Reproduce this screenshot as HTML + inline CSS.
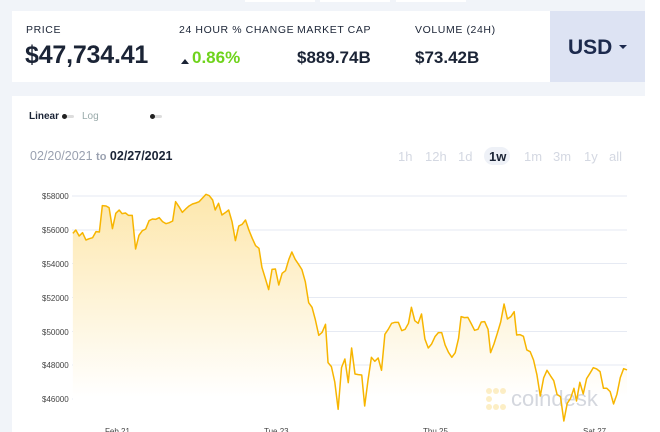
<!DOCTYPE html>
<html><head><style>
*{margin:0;padding:0;box-sizing:border-box}
body{width:660px;height:432px;overflow:hidden;background:#fff;font-family:"Liberation Sans",sans-serif;position:relative}
.bg{position:absolute;left:0;top:0;width:645px;height:432px;background:#f1f4f9}
.a{position:absolute}
.lbl{font-size:10.5px;letter-spacing:0.6px;color:#1b2436}
.val{font-weight:bold;color:#1b2436}
</style></head><body>
<div class="bg"></div>
<div class="a" style="left:245px;top:0;width:70px;height:2px;background:#fff"></div>
<div class="a" style="left:320px;top:0;width:70px;height:2px;background:#fff"></div>
<div class="a" style="left:396px;top:0;width:70px;height:2px;background:#fff"></div>
<div class="a" style="left:12px;top:11px;width:538px;height:71px;background:#fff"></div>
<div class="a" style="left:550px;top:11px;width:95px;height:71px;background:#dde3f3"></div>
<div class="a lbl" style="left:26px;top:24px">PRICE</div>
<div class="a val" style="left:25px;top:41px;font-size:25px;letter-spacing:-0.2px">$47,734.41</div>
<div class="a lbl" style="left:179px;top:24px">24 HOUR % CHANGE</div>
<div class="a" style="left:181px;top:59px;width:0;height:0;border-left:4px solid transparent;border-right:4px solid transparent;border-bottom:5px solid #1b2436"></div>
<div class="a" style="left:192px;top:48px;font-size:17px;font-weight:bold;color:#6fd31c">0.86%</div>
<div class="a lbl" style="left:297px;top:24px">MARKET CAP</div>
<div class="a val" style="left:297px;top:48px;font-size:17px">$889.74B</div>
<div class="a lbl" style="left:415px;top:24px">VOLUME (24H)</div>
<div class="a val" style="left:415px;top:48px;font-size:17px">$73.42B</div>
<div class="a val" style="left:568px;top:36px;font-size:21px;color:#1c2a4d">USD</div>
<div class="a" style="left:619px;top:45px;width:0;height:0;border-left:4px solid transparent;border-right:4px solid transparent;border-top:4px solid #1c2a4d"></div>
<div class="a" style="left:12px;top:96px;width:633px;height:336px;background:#fff"></div>
<div class="a" style="left:29px;top:111px;font-size:10px;font-weight:bold;color:#1b2436">Linear</div>
<div class="a" style="left:62px;top:115px;width:12px;height:3px;background:#ddd;border-radius:2px"></div>
<div class="a" style="left:62px;top:114px;width:5px;height:5px;background:#222;border-radius:50%"></div>
<div class="a" style="left:82px;top:111px;font-size:10px;color:#9aa">Log</div>
<div class="a" style="left:150px;top:115px;width:12px;height:3px;background:#ddd;border-radius:2px"></div>
<div class="a" style="left:150px;top:114px;width:5px;height:5px;background:#222;border-radius:50%"></div>
<div class="a" style="left:30px;top:149px;font-size:12.5px;color:#9aa1b0">02/20/2021 <span style="font-size:11px;font-weight:bold">to</span> <span style="color:#1b2436;font-weight:bold">02/27/2021</span></div>
<div class="a" style="left:398px;top:149px;font-size:13px;color:#d4d8e2">1h</div>
<div class="a" style="left:425px;top:149px;font-size:13px;color:#d4d8e2">12h</div>
<div class="a" style="left:458px;top:149px;font-size:13px;color:#d4d8e2">1d</div>
<div class="a" style="left:484px;top:147px;width:26px;height:18px;border-radius:9px;background:#eef1f7"></div>
<div class="a" style="left:489px;top:149px;font-size:13px;font-weight:bold;color:#1b2436">1w</div>
<div class="a" style="left:524px;top:149px;font-size:13px;color:#d4d8e2">1m</div>
<div class="a" style="left:553px;top:149px;font-size:13px;color:#d4d8e2">3m</div>
<div class="a" style="left:584px;top:149px;font-size:13px;color:#d4d8e2">1y</div>
<div class="a" style="left:609px;top:149px;font-size:13px;color:#d4d8e2">all</div>
<svg class="a" style="left:0;top:0" width="660" height="432">
<defs><linearGradient id="g" x1="0" y1="0" x2="0" y2="1"><stop offset="0" stop-color="#fde7ac"/><stop offset="0.85" stop-color="#fff" stop-opacity="1"/></linearGradient></defs>
<g stroke="#e6eaf3" stroke-width="1">
<line x1="72" y1="196" x2="627" y2="196"/><line x1="72" y1="230" x2="627" y2="230"/><line x1="72" y1="263.5" x2="627" y2="263.5"/><line x1="72" y1="297.5" x2="627" y2="297.5"/><line x1="72" y1="331.5" x2="627" y2="331.5"/><line x1="72" y1="365" x2="627" y2="365"/><line x1="72" y1="399" x2="627" y2="399"/>
</g>
<g transform="translate(0,170) scale(0.4211,0.3333)">
<path fill="url(#g)" d="M173,190 L180,180 188,198 196,188 204,210 212,206 220,203 228,185 236,186 243,107 252,108 259,113 267,176 275,130 283,120 290,131 298,129 305,136 314,136 322,237 330,196 338,182 346,177 354,152 362,147 370,148 378,143 386,155 394,161 402,158 410,153 417,95 425,110 433,127 441,117 449,108 457,102 465,99 473,95 481,84 489,73 497,77 505,90 511,120 519,100 527,135 535,128 543,120 551,155 559,212 567,168 575,163 583,150 591,180 599,205 607,227 615,235 622,292 630,325 638,359 646,298 654,297 662,345 670,310 678,302 686,268 693,246 701,268 709,283 717,299 725,335 733,398 741,412 749,450 757,496 765,487 773,463 779,578 787,590 795,636 803,718 811,593 819,567 827,638 835,534 843,612 851,614 859,615 866,708 874,630 882,562 890,574 898,564 906,601 914,493 922,478 930,460 938,457 946,457 954,482 962,478 970,460 977,412 985,452 993,460 1001,432 1009,507 1017,534 1025,522 1033,500 1041,488 1049,488 1057,525 1065,547 1073,562 1081,548 1089,505 1095,440 1103,443 1111,442 1119,461 1127,481 1135,478 1143,456 1151,455 1159,478 1165,548 1173,522 1181,490 1189,456 1197,402 1205,447 1213,440 1221,425 1227,495 1235,494 1243,499 1251,540 1259,545 1267,570 1275,614 1283,678 1291,624 1299,601 1307,617 1315,632 1323,674 1331,680 1339,753 1347,700 1355,685 1363,655 1369,693 1377,637 1385,672 1393,626 1401,610 1409,593 1417,597 1425,605 1433,655 1441,655 1449,665 1457,702 1465,673 1473,623 1481,596 1489,600 L1489,790 L173,790 Z"/>
</g>
<g opacity="0.6" fill="#fbe3a0"><circle cx="489" cy="391" r="3"/><circle cx="496" cy="391" r="3"/><circle cx="503" cy="391" r="3"/><circle cx="489" cy="399" r="3"/><circle cx="489" cy="407" r="3"/><circle cx="496" cy="407" r="3"/><circle cx="503" cy="407" r="3"/></g>
<text x="511" y="406" font-size="22" fill="#d4d7de" font-family="Liberation Sans">coindesk</text>
<g transform="translate(0,170) scale(0.4211,0.3333)">
<polyline fill="none" stroke="#f7b500" stroke-width="1.5" vector-effect="non-scaling-stroke" stroke-linejoin="round" points="173,190 180,180 188,198 196,188 204,210 212,206 220,203 228,185 236,186 243,107 252,108 259,113 267,176 275,130 283,120 290,131 298,129 305,136 314,136 322,237 330,196 338,182 346,177 354,152 362,147 370,148 378,143 386,155 394,161 402,158 410,153 417,95 425,110 433,127 441,117 449,108 457,102 465,99 473,95 481,84 489,73 497,77 505,90 511,120 519,100 527,135 535,128 543,120 551,155 559,212 567,168 575,163 583,150 591,180 599,205 607,227 615,235 622,292 630,325 638,359 646,298 654,297 662,345 670,310 678,302 686,268 693,246 701,268 709,283 717,299 725,335 733,398 741,412 749,450 757,496 765,487 773,463 779,578 787,590 795,636 803,718 811,593 819,567 827,638 835,534 843,612 851,614 859,615 866,708 874,630 882,562 890,574 898,564 906,601 914,493 922,478 930,460 938,457 946,457 954,482 962,478 970,460 977,412 985,452 993,460 1001,432 1009,507 1017,534 1025,522 1033,500 1041,488 1049,488 1057,525 1065,547 1073,562 1081,548 1089,505 1095,440 1103,443 1111,442 1119,461 1127,481 1135,478 1143,456 1151,455 1159,478 1165,548 1173,522 1181,490 1189,456 1197,402 1205,447 1213,440 1221,425 1227,495 1235,494 1243,499 1251,540 1259,545 1267,570 1275,614 1283,678 1291,624 1299,601 1307,617 1315,632 1323,674 1331,680 1339,753 1347,700 1355,685 1363,655 1369,693 1377,637 1385,672 1393,626 1401,610 1409,593 1417,597 1425,605 1433,655 1441,655 1449,665 1457,702 1465,673 1473,623 1481,596 1489,600"/>
</g>
<g font-size="8" fill="#444" font-family="Liberation Sans">
<text x="42" y="199">$58000</text><text x="42" y="233">$56000</text><text x="42" y="267">$54000</text><text x="42" y="301">$52000</text><text x="42" y="335">$50000</text><text x="42" y="368">$48000</text><text x="42" y="402">$46000</text>
<text x="105" y="434">Feb 21</text><text x="264" y="434">Tue 23</text><text x="423" y="434">Thu 25</text><text x="583" y="434">Sat 27</text>
</g>
</svg>
</body></html>
